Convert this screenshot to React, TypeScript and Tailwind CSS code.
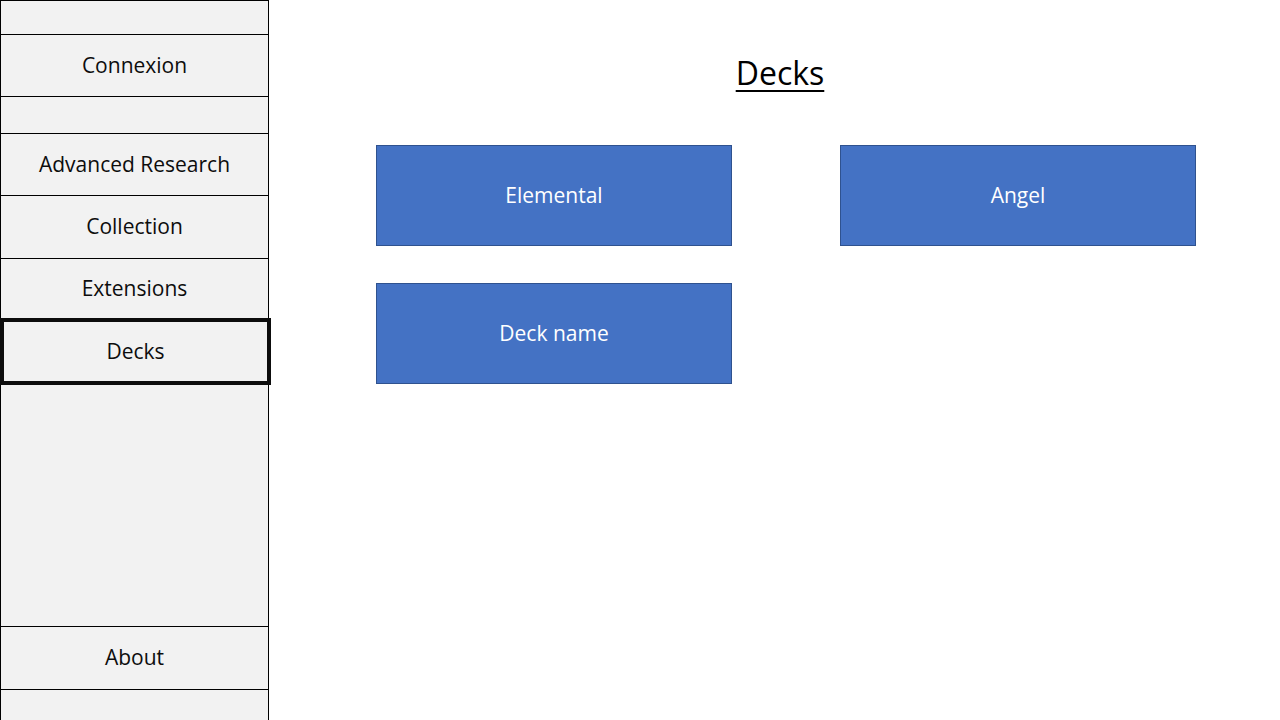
import React from "react";

const font = { fontFamily: '"Open Sans", "Lato", sans-serif' };

const decks = ["Elemental", "Angel", "Deck name"];

const NavRow = ({ label, h }: { label?: string; h: string }) => (
  <div
    className={`${h} w-full shrink-0 border-b border-black flex items-center justify-center text-[21px] leading-[24px] pb-[2px] text-[#0d0d0d]`}
  >
    {label}
  </div>
);

const App = () => {
  return (
    <div className="w-[1280px] h-[720px] flex bg-white overflow-hidden" style={font}>
      {/* Sidebar */}
      <div className="w-[269px] h-full shrink-0 bg-[#f2f2f2] border-l border-t border-r border-black flex flex-col">
        <NavRow h="h-[34px]" />
        <NavRow h="h-[62px]" label="Connexion" />
        <NavRow h="h-[37px]" />
        <NavRow h="h-[62px]" label="Advanced Research" />
        <NavRow h="h-[63px]" label="Collection" />
        <div className="h-[59px] w-full shrink-0 flex items-center justify-center text-[21px] leading-[24px] pb-[2px] text-[#0d0d0d]">
          Extensions
        </div>
        <div className="h-[67px] w-[271px] -ml-px shrink-0 border-4 border-[#0d0d0d] flex items-center justify-center text-[21px] leading-[24px] pb-[2px] text-[#0d0d0d] relative z-10">
          Decks
        </div>
        <div className="flex-1" />
        <div className="h-[64px] w-full shrink-0 border-y border-black flex items-center justify-center text-[21px] leading-[24px] pb-[2px] text-[#0d0d0d]">
          About
        </div>
        <div className="h-[30px] w-full shrink-0" />
      </div>

      {/* Main */}
      <div className="flex-1 flex flex-col pt-[51px]">
        <div className="pl-[11px] text-center">
          <span className="text-[32px] leading-[44px] underline underline-offset-[5px] decoration-[2px] text-black">
            Decks
          </span>
        </div>
        <div className="mt-[50px] pl-[107px] grid grid-cols-[356px_356px] gap-x-[108px] gap-y-[37px]">
          {decks.map((d) => (
            <div
              key={d}
              className="h-[101px] bg-[#4472c4] border border-[#2f528f] flex items-center justify-center text-white text-[21px] leading-[24px] pb-[2px]"
            >
              {d}
            </div>
          ))}
        </div>
      </div>
    </div>
  );
};

export default App;
